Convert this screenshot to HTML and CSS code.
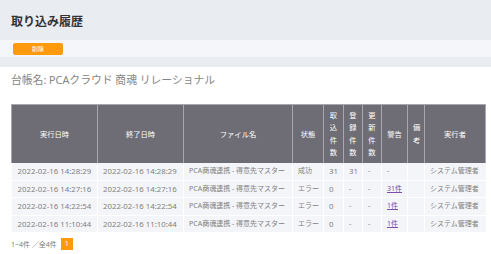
FILE: index.html
```html
<!DOCTYPE html>
<html lang="ja">
<head>
    <meta charset="UTF-8">
    <meta name="viewport" content="width=device-width, initial-scale=1.0">
    <title>取り込み履歴</title>
    <link rel="stylesheet" href="styles.css">
</head>
<body>
    <div class="page-header">
        <h1>取り込み履歴</h1>
    </div>

    <div class="toolbar">
        <button class="btn-delete">削除</button>
    </div>
    <div class="toolbar-bottom"></div>

    <div class="content">
        <p class="ledger-name">台帳名: PCAクラウド 商魂 リレーショナル</p>

        <table class="history-table">
            <colgroup>
                <col style="width: 86px">
                <col style="width: 86px">
                <col style="width: 109px">
                <col style="width: 31px">
                <col style="width: 20px">
                <col style="width: 19px">
                <col style="width: 19px">
                <col style="width: 26px">
                <col style="width: 17px">
                <col style="width: 61px">
            </colgroup>
            <thead>
                <tr>
                    <th>実行日時</th>
                    <th>終了日時</th>
                    <th>ファイル名</th>
                    <th>状態</th>
                    <th class="narrow">取込件数</th>
                    <th class="narrow">登録件数</th>
                    <th class="narrow">更新件数</th>
                    <th>警告</th>
                    <th class="narrow">備考</th>
                    <th>実行者</th>
                </tr>
            </thead>
            <tbody>
                <tr>
                    <td class="num">2022-02-16 14:28:29</td>
                    <td class="num">2022-02-16 14:28:29</td>
                    <td>PCA商魂連携 - 得意先マスター</td>
                    <td>成功</td>
                    <td class="num">31</td>
                    <td class="num">31</td>
                    <td>-</td>
                    <td>-</td>
                    <td></td>
                    <td>システム管理者</td>
                </tr>
                <tr>
                    <td class="num">2022-02-16 14:27:16</td>
                    <td class="num">2022-02-16 14:27:16</td>
                    <td>PCA商魂連携 - 得意先マスター</td>
                    <td>エラー</td>
                    <td class="num">0</td>
                    <td>-</td>
                    <td>-</td>
                    <td><a href="#">31件</a></td>
                    <td></td>
                    <td>システム管理者</td>
                </tr>
                <tr>
                    <td class="num">2022-02-16 14:22:54</td>
                    <td class="num">2022-02-16 14:22:54</td>
                    <td>PCA商魂連携 - 得意先マスター</td>
                    <td>エラー</td>
                    <td class="num">0</td>
                    <td>-</td>
                    <td>-</td>
                    <td><a href="#">1件</a></td>
                    <td></td>
                    <td>システム管理者</td>
                </tr>
                <tr>
                    <td class="num">2022-02-16 11:10:44</td>
                    <td class="num">2022-02-16 11:10:44</td>
                    <td>PCA商魂連携 - 得意先マスター</td>
                    <td>エラー</td>
                    <td class="num">0</td>
                    <td>-</td>
                    <td>-</td>
                    <td><a href="#">1件</a></td>
                    <td></td>
                    <td>システム管理者</td>
                </tr>
            </tbody>
        </table>

        <div class="pager">
            <span class="pager-info">1~4件 ／全4件</span>
            <span class="pager-page">1</span>
        </div>
    </div>
</body>
</html>
```

FILE: styles.css
```css
body {
    font-family: 'Noto Sans', 'Noto Sans CJK JP', sans-serif;
    background-color: #fff;
    color: #808080;
    margin: 0;
    padding: 0;
}

.page-header {
    background-color: #e9ecf1;
    height: 40px;
    display: flex;
    align-items: center;
    padding-left: 11px;
}

h1 {
    margin: 0;
    font-size: 12px;
    font-weight: bold;
    color: #333;
    font-family: 'Noto Sans CJK JP', sans-serif;
}

.toolbar {
    background-color: #f4f6f9;
    height: 17px;
    display: flex;
    align-items: center;
    padding-left: 13px;
}

.toolbar-bottom {
    background-color: #e9ecf1;
    height: 10px;
}

.btn-delete {
    background-color: #ff9a0f;
    color: #fff;
    border: none;
    border-radius: 2px;
    width: 50px;
    height: 12px;
    padding: 0;
    font-size: 6px;
    line-height: 12px;
    font-family: 'Noto Sans CJK JP', sans-serif;
    cursor: pointer;
}

.content {
    padding: 0 6px 0 11px;
}

.ledger-name {
    margin: 3px 0 0;
    height: 20px;
    line-height: 20px;
    font-size: 10.8px;
    color: #858585;
}

.history-table {
    margin-top: 14px;
    border-collapse: collapse;
    table-layout: fixed;
    width: 474px;
    font-size: 7px;
}

.history-table th {
    background-color: #6e6d75;
    color: #fff;
    font-weight: normal;
    font-size: 7.3px;
    text-align: center;
    border: 1px solid #a9a8ae;
    border-bottom: none;
    height: 58px;
    line-height: 12.5px;
    padding: 0 4px;
    box-sizing: border-box;
}

.history-table th.narrow {
    padding: 0 5px;
}

.history-table td {
    background-color: #f4f5f9;
    border: 1px solid #fff;
    border-top: none;
    height: 17.5px;
    line-height: 16px;
    padding: 0 5px;
    white-space: nowrap;
    overflow: hidden;
    box-sizing: border-box;
}

.history-table td.num {
    font-size: 7.8px;
}

.history-table td:first-child {
    padding-left: 6px;
    border-left: none;
}

.history-table td:last-child {
    border-right: none;
}

.history-table a {
    color: #7b4fa8;
}

.pager {
    display: flex;
    align-items: center;
    gap: 4px;
    margin-top: 5px;
    font-size: 7px;
}

.pager-page {
    background-color: #ff9a0f;
    color: #fff;
    width: 12px;
    height: 12px;
    line-height: 12px;
    text-align: center;
    font-size: 7px;
}
```
